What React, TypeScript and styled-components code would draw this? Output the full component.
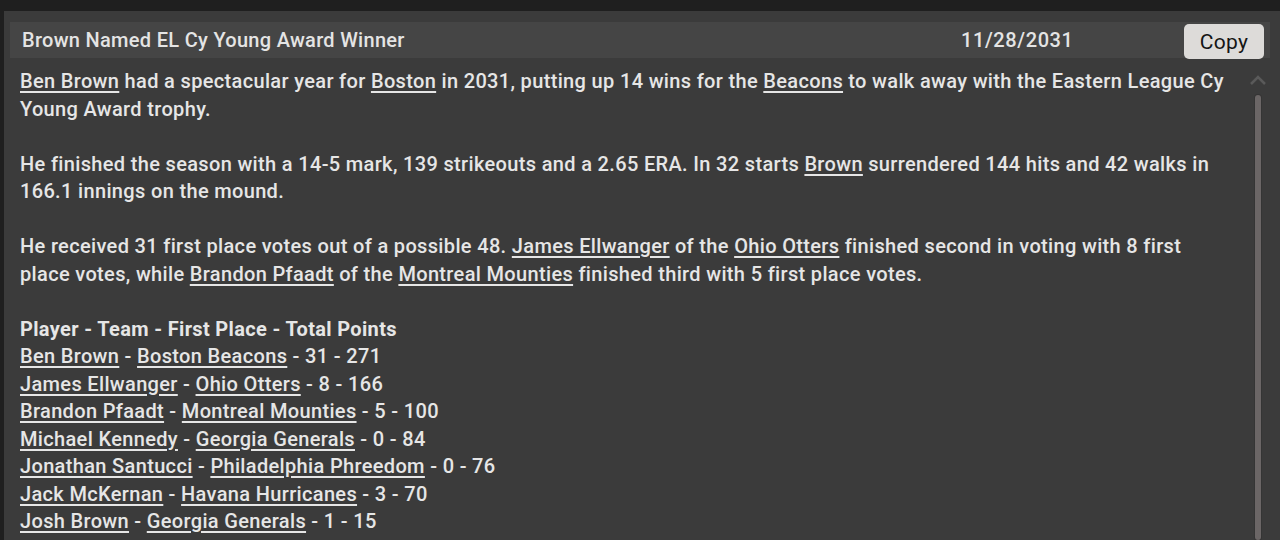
import React from "react";
import styled, { createGlobalStyle } from "styled-components";

const Global = createGlobalStyle`
  html, body { margin: 0; padding: 0; background: #1f1f1f; }
  body { font-family: Roboto, "Liberation Sans", sans-serif; overflow: hidden; }
`;

const Page = styled.div`
  width: 1280px;
  height: 540px;
  background: #1f1f1f;
  padding: 11px 0 0 4px;
  box-sizing: border-box;
`;

const Panel = styled.div`
  height: 529px;
  background: #3b3b3b;
  padding: 11px 10px 0 6px;
  box-sizing: border-box;
  display: flex;
  flex-direction: column;
  overflow: hidden;
`;

const Header = styled.div`
  display: flex;
  align-items: center;
  height: 36px;
  background: #454545;
  padding: 0 6px 0 12px;
  flex-shrink: 0;
`;

const Title = styled.div`
  flex: 1;
  color: #e4e4e4;
  font-size: 20px;
  letter-spacing: 0.3px;
  font-weight: 500;
`;

const DateText = styled.div`
  width: 223px;
  color: #e4e4e4;
  font-size: 20px;
  letter-spacing: 0.6px;
  font-weight: 500;
`;

const CopyButton = styled.button`
  width: 80px;
  height: 35px;
  margin-top: 3px;
  background: #dddbd9;
  border: none;
  border-radius: 5px;
  color: #151515;
  font-family: Roboto, "Liberation Sans", sans-serif;
  font-size: 21px;
  font-weight: 400;
  letter-spacing: 0.3px;
  padding: 0;
`;

const BodyRow = styled.div`
  display: flex;
  flex: 1;
  min-height: 0;
`;

const Body = styled.div`
  flex: 1;
  padding: 10px 20px 0 10px;
  color: #e6e6e6;
  font-size: 20px;
  letter-spacing: 0.34px;
  font-weight: 500;
  line-height: 27.5px;
`;

const Para = styled.p`
  margin: 0 0 27.5px 0;
`;

const Line = styled.div`
  white-space: nowrap;
`;

const Bold = styled.span`
  font-weight: 700;
`;

const Link = styled.span`
  text-decoration: underline;
  text-underline-offset: 3px;
  text-decoration-thickness: 1.5px;
`;

const Scrollbar = styled.div`
  width: 18px;
  margin-right: 3px;
  display: flex;
  flex-direction: column;
  align-items: center;
  padding-top: 16px;
`;

const Track = styled.div`
  margin-top: 9px;
  flex: 1;
  width: 6px;
  border-radius: 3px;
  background: #6b6666;
  box-shadow: 0 0 0 1px #353535;
`;

const rows: [string, string, string][] = [
  ["Ben Brown", "Boston Beacons", " - 31 - 271"],
  ["James Ellwanger", "Ohio Otters", " - 8 - 166"],
  ["Brandon Pfaadt", "Montreal Mounties", " - 5 - 100"],
  ["Michael Kennedy", "Georgia Generals", " - 0 - 84"],
  ["Jonathan Santucci", "Philadelphia Phreedom", " - 0 - 76"],
  ["Jack McKernan", "Havana Hurricanes", " - 3 - 70"],
  ["Josh Brown", "Georgia Generals", " - 1 - 15"],
];

export default function App() {
  return (
    <>
      <Global />
      <Page>
        <Panel>
          <Header>
            <Title>Brown Named EL Cy Young Award Winner</Title>
            <DateText>11/28/2031</DateText>
            <CopyButton>Copy</CopyButton>
          </Header>
          <BodyRow>
            <Body>
              <Para>
                <Link>Ben Brown</Link> had a spectacular year for <Link>Boston</Link> in 2031, putting up 14 wins for the{" "}
                <Link>Beacons</Link> to walk away with the Eastern League Cy Young Award trophy.
              </Para>
              <Para>
                He finished the season with a 14-5 mark, 139 strikeouts and a 2.65 ERA. In 32 starts <Link>Brown</Link>{" "}
                surrendered 144 hits and 42 walks in 166.1 innings on the mound.
              </Para>
              <Para>
                He received 31 first place votes out of a possible 48. <Link>James Ellwanger</Link> of the{" "}
                <Link>Ohio Otters</Link> finished second in voting with 8 first place votes, while{" "}
                <Link>Brandon Pfaadt</Link> of the <Link>Montreal Mounties</Link> finished third with 5 first place votes.
              </Para>
              <Line>
                <Bold>Player - Team - First Place - Total Points</Bold>
              </Line>
              {rows.map(([p, t, rest]) => (
                <Line key={p + t}>
                  <Link>{p}</Link> - <Link>{t}</Link>
                  {rest}
                </Line>
              ))}
            </Body>
            <Scrollbar>
              <svg width="18" height="12" viewBox="0 0 18 12">
                <path d="M2 10 L9 3 L16 10" fill="none" stroke="#5a5a5a" strokeWidth="2.5" />
              </svg>
              <Track />
            </Scrollbar>
          </BodyRow>
        </Panel>
      </Page>
    </>
  );
}
